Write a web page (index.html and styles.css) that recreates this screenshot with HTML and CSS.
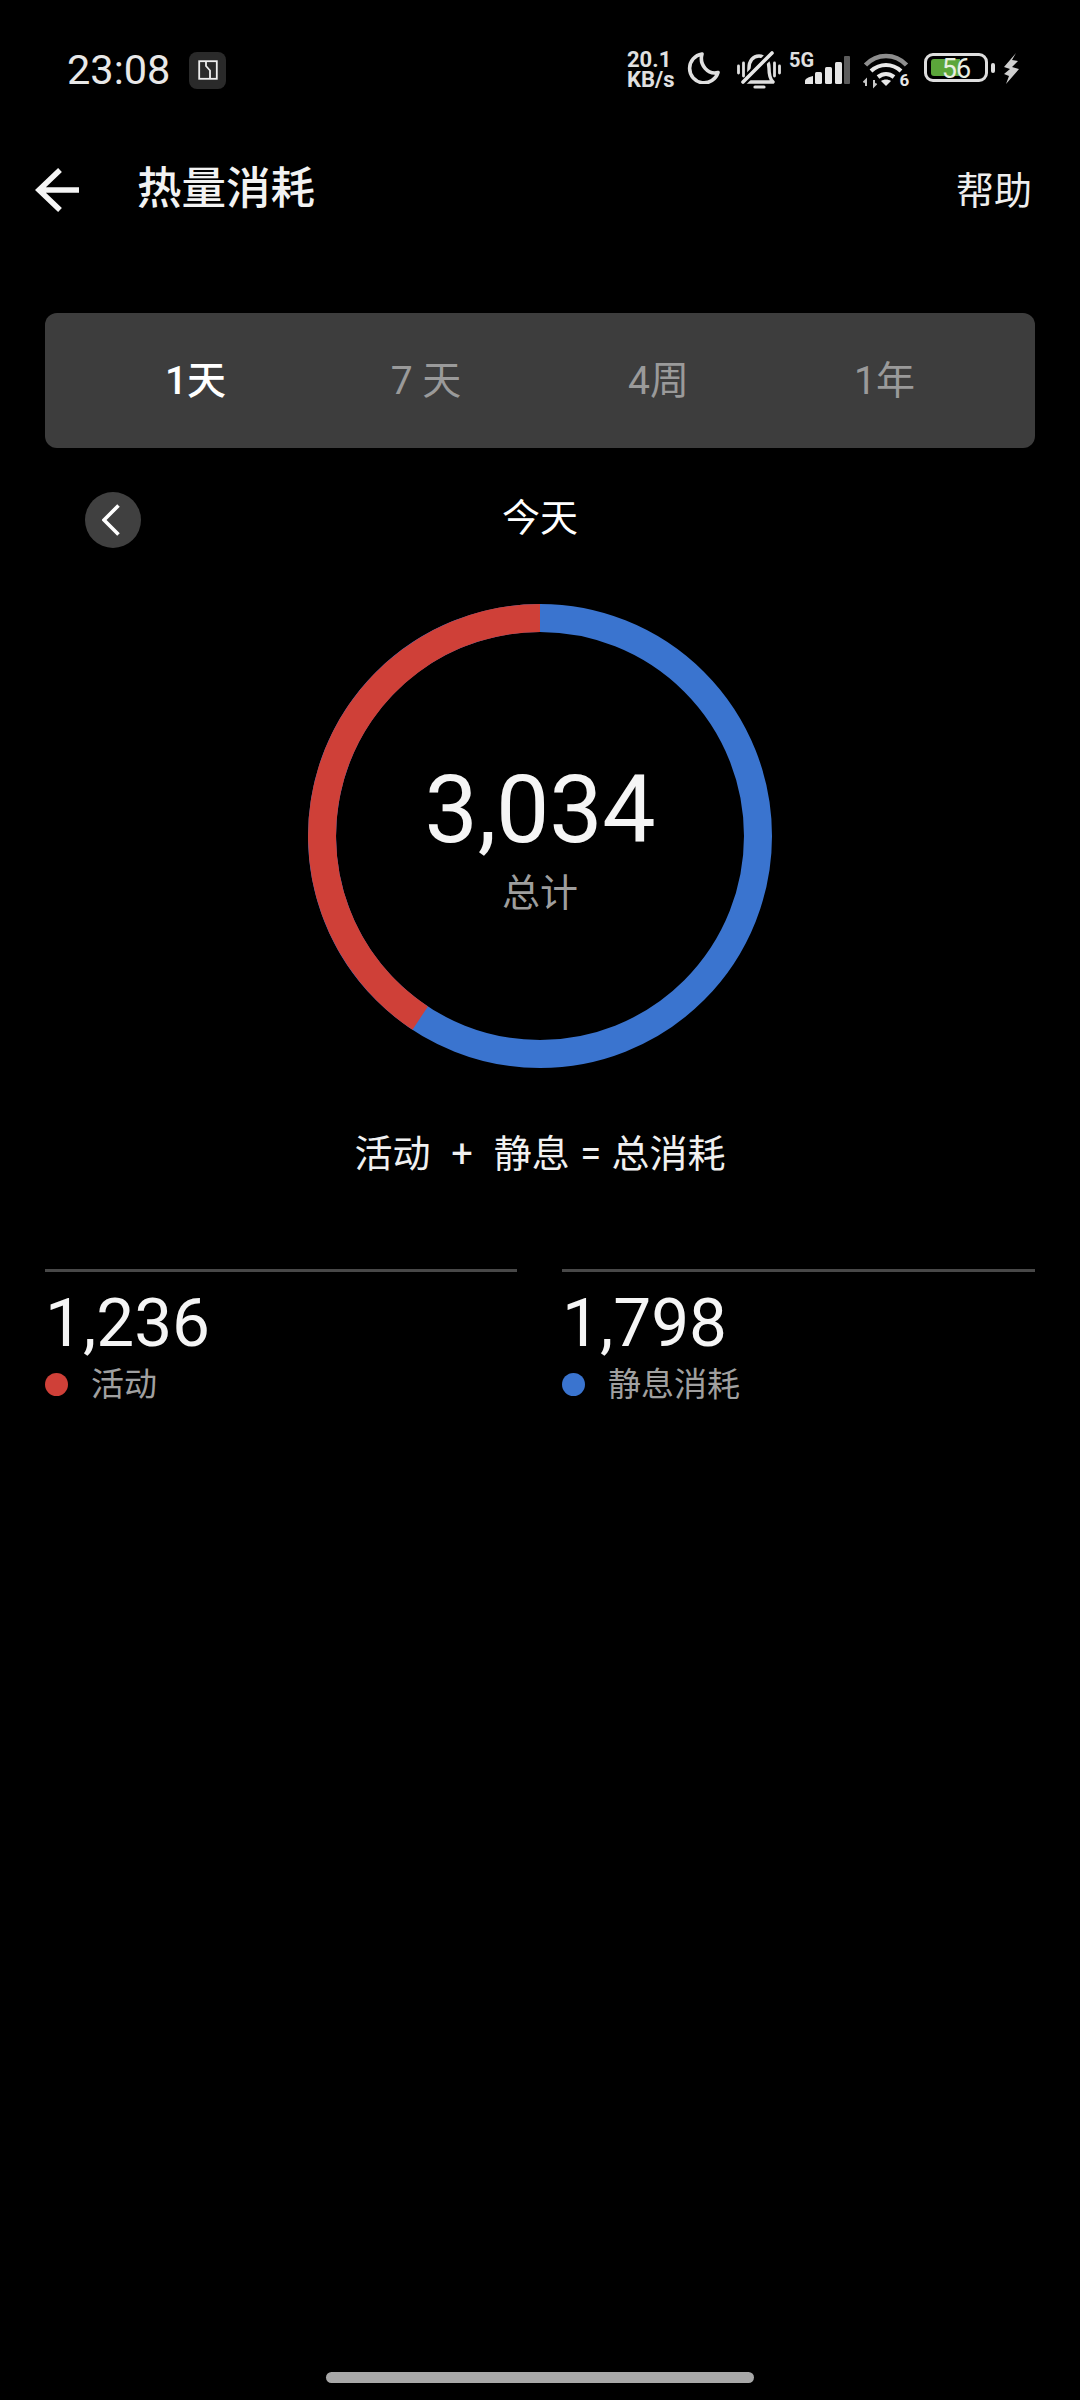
FILE: index.html
```html
<!DOCTYPE html>
<html lang="zh-CN">
<head>
<meta charset="utf-8">
<title>热量消耗</title>
<link rel="stylesheet" href="styles.css">
</head>
<body>
<div class="screen">
  <div class="status">
    <div class="status-left">
      <span class="time">23:08</span>
      <span class="app-badge">
        <svg viewBox="0 0 20 20" width="20" height="20"><rect x="1.2" y="1.2" width="17.6" height="17.6" fill="none" stroke="#eee" stroke-width="1.8"/><path d="M8 2v4l4 4.5V18" fill="none" stroke="#eee" stroke-width="1.8"/></svg>
      </span>
    </div>
    <div class="status-right">
      <span class="speed">20.1<br>KB/s</span>
      <svg class="i-moon" viewBox="0 0 34 33" width="34" height="33"><path d="M15 3A14.5 14.5 0 1 0 31 21.5C21 24 12 14 15 3Z" fill="none" stroke="#e0e0e0" stroke-width="3.6" stroke-linejoin="round"/></svg>
      <svg class="i-bell" viewBox="0 0 44 38" width="44" height="38"><path d="M9 31c2-3 3-6 3-14 0-7 4-12 10-12s10 5 10 12c0 8 1 11 4 14z" fill="none" stroke="#e0e0e0" stroke-width="3.4" stroke-linejoin="round"/><path d="M35 2 6 31" stroke="#000" stroke-width="8"/><path d="M35 2 6 31" stroke="#e6e6e6" stroke-width="3.6" stroke-linecap="round"/><path d="M18 36h9" stroke="#e0e0e0" stroke-width="3.2" stroke-linecap="round"/><path d="M1.5 15v7M6.5 12v13M37.500 12v13M42.500 15v7" stroke="#e0e0e0" stroke-width="2.8" stroke-linecap="round"/></svg>
      <span class="signal">
        <span class="net">5G</span>
        <svg viewBox="0 0 45 28" width="45" height="28"><path d="M0 28v-3c0-2 3-4 8-5v8z" fill="#e6e6e6"/><rect x="10" y="16" width="7" height="12" rx="1.500" fill="#e6e6e6"/><rect x="20" y="11" width="7" height="17" rx="1.500" fill="#e6e6e6"/><rect x="30" y="6" width="7" height="22" rx="1.500" fill="#e6e6e6"/><rect x="39" y="0" width="6" height="28" rx="1" fill="#5c5c5c"/></svg>
      </span>
      <svg class="i-wifi" viewBox="0 0 48 36" width="48" height="36"><path d="M2.500 12C14 0 32 0 43.500 12" fill="none" stroke="#8e8e8e" stroke-width="4.6"/><path d="M8 18c9-8 21-8 30 0M15 24c5-4 11-4 16 0" fill="none" stroke="#e8e8e8" stroke-width="4.2"/><path d="M23 33l-5-5c3-2 7-2 10 0z" fill="#e8e8e8"/><path d="M3 33v-6l-2.500 2.500M11 27v6l2.500-2.500" fill="none" stroke="#c8c8c8" stroke-width="2"/><text x="36.500" y="33" class="wifi-six">6</text></svg>
      <span class="battery"><span class="battery-body"><span class="battery-fill"></span><span class="battery-num">56</span></span><span class="battery-cap"></span></span>
      <svg class="i-bolt" viewBox="0 0 16 31" width="16" height="31"><path d="M13 0 1 14l6 2-6 5 5 2-3 8 13-15-7-2 6-6-6-1z" fill="#cfcfcf"/></svg>
    </div>
  </div>

  <header class="topbar">
    <svg class="back" viewBox="0 0 46 46" width="46" height="46"><path d="M25 3 4 23l21 20M4 23h40" fill="none" stroke="#f5f5f5" stroke-width="5.5"/></svg>
    <h1 class="title">热量消耗</h1>
    <span class="help">帮助</span>
  </header>

  <nav class="tabs">
    <span class="tab active">1天</span>
    <span class="tab">7 天</span>
    <span class="tab">4周</span>
    <span class="tab">1年</span>
  </nav>

  <div class="date-row">
    <span class="prev"><svg viewBox="0 0 18 32" width="18" height="32"><path d="M16.500 1.500 2 16l14.500 14.500" fill="none" stroke="#fff" stroke-width="3.6"/></svg></span>
    <span class="date">今天</span>
  </div>

  <div class="ring-wrap">
    <svg class="ring" viewBox="0 0 464 464" width="464" height="464">
      <circle cx="232" cy="232" r="218" fill="none" stroke="#3a74cf" stroke-width="28"/>
      <path d="M232 14A218 218 0 0 0 112.200 414.100" fill="none" stroke="#cf4038" stroke-width="28"/>
    </svg>
    <div class="ring-center">
      <div class="total">3,034</div>
      <div class="total-label">总计</div>
    </div>
  </div>

  <p class="formula">活动 &nbsp;+&nbsp; 静息 = 总消耗</p>

  <section class="stats">
    <div class="stat">
      <div class="stat-num">1,236</div>
      <div class="stat-label"><i class="dot dot-red"></i>活动</div>
    </div>
    <div class="stat">
      <div class="stat-num">1,798</div>
      <div class="stat-label"><i class="dot dot-blue"></i>静息消耗</div>
    </div>
  </section>

  <div class="home-bar"></div>
</div>
</body>
</html>
```
FILE: styles.css
```css
* { box-sizing: border-box; }
html, body { margin: 0; padding: 0; background: #000; }
.screen {
  width: 1080px;
  height: 2400px;
  background: #000;
  color: #fff;
  font-family: Roboto, "Noto Sans CJK SC", sans-serif;
  display: flex;
  flex-direction: column;
  overflow: hidden;
}

/* status bar */
.status {
  height: 143px;
  padding: 50px 61px 0 67px;
  display: flex;
  justify-content: space-between;
  align-items: flex-start;
}
.status-left { display: flex; align-items: center; gap: 19px; height: 40px; }
.time { font-size: 41.5px; color: #e8e8e8; line-height: 40px; }
.app-badge {
  width: 37px; height: 37px; border-radius: 8px; background: #2a2a2a;
  display: flex; align-items: center; justify-content: center;
}
.status-right { display: flex; align-items: flex-start; color: #e6e6e6; }
.speed { display: block; font-size: 22px; font-weight: 700; line-height: 20px; width: 48px; color: #e0e0e0; flex: none; }
.i-moon { margin-left: 12px; margin-top: 1px; flex: none; }
.i-bell { margin-left: 16px; margin-top: 1px; flex: none; }
.signal { margin-left: 8px; width: 61px; height: 34px; position: relative; flex: none; }
.signal svg { position: absolute; right: 0; bottom: 0; }
.net { display: block; font-size: 20px; font-weight: 700; line-height: 20px; color: #e0e0e0; }
.i-wifi { margin-left: 13px; margin-top: 3px; flex: none; }
.wifi-six { font: 700 17px Roboto, sans-serif; fill: #e6e6e6; }
.battery { display: flex; align-items: center; gap: 3px; margin-left: 13px; margin-top: 3px; flex: none; }
.battery-body {
  width: 64px; height: 29px; border: 3px solid #dedede; border-radius: 9px;
  position: relative; padding: 3px 4px; display: block;
}
.battery-fill { display: block; width: 29px; height: 100%; background: #5ba63a; border-radius: 3px 0 0 3px; }
.battery-num { position: absolute; inset: 0; text-align: center; font-size: 27px; line-height: 26px; color: #e8efe2; letter-spacing: -1px; }
.battery-cap { width: 4px; height: 10px; background: #dedede; border-radius: 2px; }
.i-bolt { margin-left: 8px; margin-top: 3px; flex: none; }

/* top bar */
.topbar {
  height: 90px;
  padding: 0 48px 0 35px;
  display: flex;
  align-items: center;
  flex: none;
}
.back { flex: none; margin-top: 4px; }
.title { font-size: 44.5px; font-weight: 500; margin: 2px 0 0 56px; flex: 1; color: #f2f2f2; line-height: 60px; }
.help { font-size: 38px; color: #eee; padding-bottom: 2px; }

/* range tabs */
.tabs {
  margin: 80px 45px 0;
  height: 135px;
  flex: none;
  padding: 0 0 7px 36px;
  background: #3d3d3d;
  border-radius: 12px;
  display: grid;
  grid-template-columns: 229px 232px 233px 219px;
  align-items: center;
  justify-items: center;
}
.tab { font-size: 39px; color: #9a9a9a; }
.tab.active { color: #fff; font-weight: 500; }

/* date row */
.date-row { height: 56px; margin-top: 44px; padding-bottom: 4px; position: relative; display: flex; justify-content: center; align-items: center; flex: none; }
.prev {
  position: absolute; left: 85px; top: 0;
  width: 56px; height: 56px; border-radius: 50%; background: #404040;
  display: flex; align-items: center; justify-content: center;
  padding-right: 4px;
}
.date { font-size: 38px; line-height: 52px; }

/* ring */
.ring-wrap { width: 464px; height: 464px; margin: 56px auto 0; position: relative; flex: none; }
.ring { display: block; }
.ring-center { position: absolute; inset: 0; display: flex; flex-direction: column; align-items: center; padding-top: 154px; }
.total { font-size: 95px; line-height: 104px; color: #f5f5f5; letter-spacing: -0.3px; }
.total-label { font-size: 38px; line-height: 46px; color: #9e9e9e; margin-top: 8px; }
.formula { margin: 61px 0 0; text-align: center; font-size: 38px; line-height: 50px; color: #f0f0f0; word-spacing: 1px; flex: none; }

/* stats */
.stats { display: grid; grid-template-columns: 472px 473px; gap: 45px; padding: 0 45px; margin-top: 90px; flex: none; }
.stat { border-top: 3px solid #484848; padding-top: 13px; }
.stat-num { font-size: 67.5px; line-height: 76px; color: #f5f5f5; }
.stat-label { display: flex; align-items: center; font-size: 33px; line-height: 47px; color: #a0a0a0; }
.dot { width: 23px; height: 23px; border-radius: 50%; margin-right: 23px; display: block; }
.dot-red { background: #cf4038; }
.dot-blue { background: #3a74cf; }

/* home indicator */
.home-bar { width: 428px; height: 11px; border-radius: 6px; background: #a8a8a8; align-self: center; margin-top: auto; margin-bottom: 17px; flex: none; }
```
